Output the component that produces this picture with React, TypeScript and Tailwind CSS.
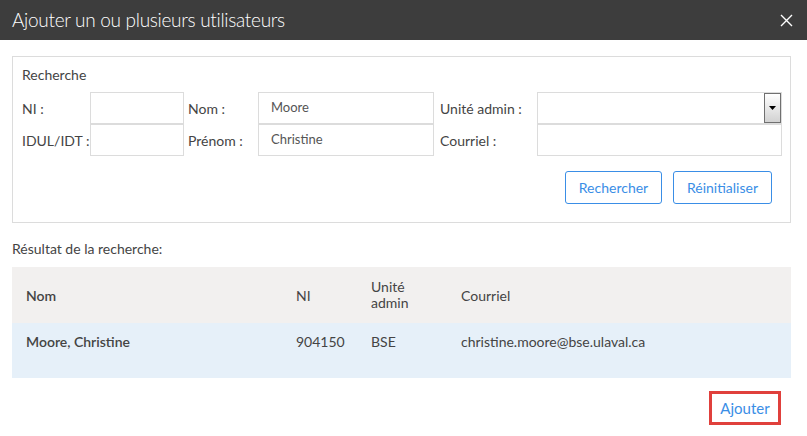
import React from 'react';

const font = { fontFamily: 'Lato, "Open Sans", sans-serif' };

const Field: React.FC<{ value?: string }> = ({ value }) => (
  <div className="h-[32px] border border-[#dcdcdc] bg-white flex items-center px-3 text-[13px] text-[#555]">
    {value}
  </div>
);

export default function App() {
  return (
    <div className="w-[807px] h-[436px] bg-white overflow-hidden text-[#444]" style={font}>
      <div className="h-10 bg-[#3d3d3d] flex items-center justify-between pl-3 pr-[14px]">
        <h1 className="text-white text-[19px] font-light tracking-[-0.3px]">Ajouter un ou plusieurs utilisateurs</h1>
        <svg width="13" height="13" viewBox="0 0 13 13" className="text-white">
          <path d="M1 1L12 12M12 1L1 12" stroke="currentColor" strokeWidth="1.4" />
        </svg>
      </div>

      <div className="pl-3 pr-4">
        <div className="mt-4 border border-[#dcdcdc] pl-[9px] pr-[18px] pt-[8px] pb-[18px]">
          <div className="text-[14px] text-[#444] h-[20px] leading-[20px]">Recherche</div>
          <div className="mt-[7px] grid grid-cols-[68px_94px_74px_176px_103px_245px] text-[14px] text-[#444]">
            <div className="flex items-center">NI :</div>
            <Field />
            <div className="flex items-center pl-[4px]">Nom :</div>
            <Field value="Moore" />
            <div className="flex items-center pl-[6px]">Unité admin :</div>
            <div className="h-[32px] border border-[#dcdcdc] bg-white flex justify-end items-start">
              <div className="w-[17px] h-[30px] border border-[#707070] bg-gradient-to-b from-white to-[#d2d2d2] flex items-center justify-center">
                <svg width="7" height="4" viewBox="0 0 7 4"><path d="M0 0H7L3.5 4Z" fill="#000" /></svg>
              </div>
            </div>
            <div className="flex items-center">IDUL/IDT :</div>
            <Field />
            <div className="flex items-center pl-[4px]">Prénom :</div>
            <Field value="Christine" />
            <div className="flex items-center pl-[6px]">Courriel :</div>
            <Field />
          </div>
          <div className="mt-[15px] flex justify-end gap-[11px]">
            <button className="h-[33px] w-[97px] rounded-[3px] border-[1.5px] border-[#3a8ee6] text-[#3a8ee6] text-[14px] bg-white">Rechercher</button>
            <button className="h-[33px] w-[99px] rounded-[3px] border-[1.5px] border-[#3a8ee6] text-[#3a8ee6] text-[14px] bg-white">Réinitialiser</button>
          </div>
        </div>

        <div className="mt-[16px] text-[14px] text-[#444] leading-[20px]">Résultat de la recherche:</div>

        <table className="mt-[8px] w-full border-collapse text-[14px] text-[#444]">
          <thead>
            <tr className="bg-[#f2f0ef] h-[56px]">
              <th className="w-[270px] pl-[14px] text-left font-semibold align-middle">Nom</th>
              <th className="w-[75px] pl-[14px] text-left font-normal align-middle">NI</th>
              <th className="w-[90px] px-[14px] text-left font-normal align-middle leading-[16px]">Unité admin</th>
              <th className="pl-[14px] text-left font-normal align-middle">Courriel</th>
            </tr>
          </thead>
          <tbody>
            <tr className="bg-[#e6f0f9] h-[55px]">
              <td className="pl-[14px] pt-[8px] align-top font-semibold">Moore, Christine</td>
              <td className="pl-[14px] pt-[8px] align-top">904150</td>
              <td className="pl-[14px] pt-[8px] align-top">BSE</td>
              <td className="pl-[14px] pt-[8px] align-top">christine.moore@bse.ulaval.ca</td>
            </tr>
          </tbody>
        </table>

        <div className="mt-[13px] flex justify-end pr-[10px]">
          <button className="h-[34px] w-[72px] border-[3px] border-[#e0403c] text-[#3a8ee6] text-[15px] bg-white">Ajouter</button>
        </div>
      </div>
    </div>
  );
}
